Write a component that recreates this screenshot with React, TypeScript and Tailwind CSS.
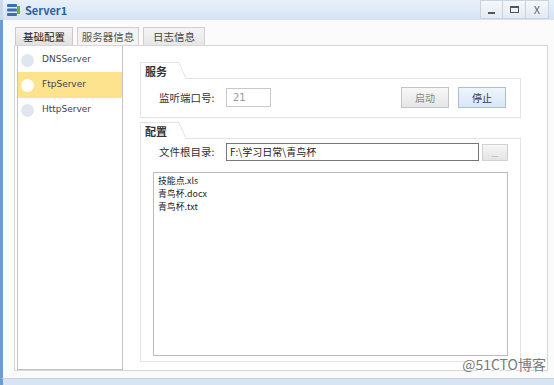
import React from "react";

const font = { fontFamily: '"Noto Sans CJK SC", "Liberation Sans", sans-serif' };

function GroupTab({ label }: { label: string }) {
  return (
    <div className="flex items-end h-[16px]">
      <div className="h-[16px] pl-[4px] pr-[10px] border-t border-l border-[#e3e3e3] bg-white text-[11px] leading-[16px] font-bold text-[#333]">
        {label}
      </div>
      <svg width="10" height="16" className="-ml-[1px]">
        <path d="M0 0.5 L3 0.5 L9.5 15.5" stroke="#e3e3e3" fill="white" />
      </svg>
    </div>
  );
}

function Circle({ active }: { active?: boolean }) {
  return (
    <div
      className={
        "w-[13px] h-[13px] rounded-full " +
        (active ? "bg-white" : "bg-[#dfe6f0]")
      }
    />
  );
}

export default function App() {
  return (
    <div className="w-[554px] h-[385px] bg-white flex flex-col overflow-hidden relative" style={font}>
      {/* Title bar */}
      <div className="h-[20px] flex items-center bg-gradient-to-b from-[#e8f1fa] to-[#d3e3f3] border-l-[3px] border-[#c9d9ea]">
        <svg width="15" height="14" viewBox="0 0 15 14" className="ml-[3px]">
          <rect x="1" y="1" width="10" height="3" rx="1" fill="#3b6fb0" />
          <rect x="1" y="5.5" width="10" height="3" rx="1" fill="#3b6fb0" />
          <rect x="1" y="10" width="10" height="3" rx="1" fill="#3b6fb0" />
          <rect x="11" y="3" width="3" height="8" fill="#6fb03b" />
        </svg>
        <span className="ml-[4px] text-[11px] font-bold text-[#2f5f9f]">Server1</span>
        <div className="ml-auto flex h-[19px] self-start mr-[5px]">
          <div className="w-[23px] h-[19px] border border-[#c8d3de] bg-gradient-to-b from-[#f5f8fb] to-[#e2eaf2] flex items-center justify-center">
            <div className="w-[7px] h-[2px] bg-[#555] mt-[6px]" />
          </div>
          <div className="w-[23px] h-[19px] border border-l-0 border-[#c8d3de] bg-gradient-to-b from-[#f5f8fb] to-[#e2eaf2] flex items-center justify-center">
            <div className="w-[9px] h-[7px] border border-[#555] border-t-2" />
          </div>
          <div className="w-[23px] h-[19px] border border-l-0 border-[#c8d3de] bg-gradient-to-b from-[#f5f8fb] to-[#e2eaf2] flex items-center justify-center text-[11px] text-[#666]">
            X
          </div>
        </div>
      </div>

      {/* Body */}
      <div className="flex-1 flex flex-col border-l-[3px] border-[#6e9bd0] bg-[#fbfbfb]">
        {/* Tabs */}
        <div className="flex gap-[4px] mt-[7px] ml-[12px] h-[18px] items-end text-[10.5px]">
          <div className="w-[58px] h-[18px] border border-b-0 border-[#c9c9c9] bg-gradient-to-b from-[#f4f4f4] to-[#e1e1e1] flex items-center justify-center text-[#222]">
            基础配置
          </div>
          <div className="w-[62px] h-[18px] border border-b-0 border-[#cfcfcf] bg-[#f3f3f3] flex items-center justify-center text-[#555]">
            服务器信息
          </div>
          <div className="w-[62px] h-[18px] border border-b-0 border-[#cfcfcf] bg-gradient-to-b from-[#f4f4f4] to-[#e6e6e6] flex items-center justify-center text-[#444]">
            日志信息
          </div>
        </div>

        {/* Panel */}
        <div className="ml-[11px] mr-[6px] h-[326px] border border-[#d6d6d6] bg-white flex">
          {/* Left list */}
          <div className="w-[106px] ml-[2px] h-[324px] border border-t-0 border-[#c4c4c4] bg-white flex flex-col pt-[2px] text-[9px] text-[#444]" style={{ fontFamily: '"DejaVu Sans", sans-serif' }}>
            <div className="h-[24px] flex items-center pl-[3px] gap-[8px]">
              <Circle />
              <span>DNSServer</span>
            </div>
            <div className="h-[26px] flex items-center pl-[3px] gap-[8px] bg-[#fde38d]">
              <Circle active />
              <span>FtpServer</span>
            </div>
            <div className="h-[24px] flex items-center pl-[3px] gap-[8px]">
              <Circle />
              <span>HttpServer</span>
            </div>
          </div>

          {/* Right */}
          <div className="flex-1 flex flex-col pl-[17px] pr-[26px] pt-[16px] pb-[8px]">
            {/* 服务 */}
            <GroupTab label="服务" />
            <div className="h-[40px] border border-t-0 border-[#e3e3e3] flex items-center relative">
              <div className="absolute top-0 left-[44px] right-0 h-px bg-[#e3e3e3]" />
              <span className="ml-[18px] text-[10.5px] text-[#333] w-[67px]">监听端口号:</span>
              <div className="w-[45px] h-[19px] border border-[#c8c8c8] bg-white text-[10px] text-[#999] pl-[6px] leading-[17px]" style={{ fontFamily: '"DejaVu Sans", sans-serif' }}>
                21
              </div>
              <div className="ml-auto w-[48px] h-[21px] border border-[#c4c4c4] bg-gradient-to-b from-[#f7f7f7] to-[#e6e6e6] flex items-center justify-center text-[10px] text-[#888]">
                启动
              </div>
              <div className="ml-[9px] mr-[14px] w-[48px] h-[21px] border border-[#a9bfd8] bg-gradient-to-b from-[#eef5fc] to-[#d8e7f6] flex items-center justify-center text-[10px] text-[#335]">
                停止
              </div>
            </div>

            {/* 配置 */}
            <div className="mt-[4px]">
              <GroupTab label="配置" />
            </div>
            <div className="flex-1 border border-t-0 border-[#e3e3e3] flex flex-col relative">
              <div className="absolute top-0 left-[44px] right-0 h-px bg-[#e3e3e3]" />
              <div className="flex items-center mt-[5px]">
                <span className="ml-[18px] text-[10.5px] text-[#333] w-[67px]">文件根目录:</span>
                <div className="w-[253px] h-[18px] border border-[#777] bg-white text-[10px] text-[#222] pl-[3px] leading-[16px]">
                  F:\学习日常\青鸟杯
                </div>
                <div className="ml-[3px] w-[26px] h-[17px] border border-[#d0d0d0] bg-gradient-to-b from-[#f6f6f6] to-[#e4e4e4] flex items-center justify-center text-[8px] text-[#999] leading-none pt-[3px]">
                  ...
                </div>
              </div>
              <div className="mt-[11px] ml-[12px] mr-[12px] h-[184px] border border-[#bcbcbc] bg-white px-[4px] pt-[1px] text-[8.9px] text-[#222] flex flex-col">
                <div className="h-[13px] leading-[13px]">技能点.xls</div>
                <div className="h-[13px] leading-[13px]">青鸟杯.docx</div>
                <div className="h-[13px] leading-[13px]">青鸟杯.txt</div>
              </div>
            </div>
          </div>
        </div>
        <div className="flex-1 relative">
          <span className="absolute right-[8px] -top-[14px] text-[14px] text-[#7a7a7a] leading-none" style={{ textShadow: "0 0 2px #fff, 1px 1px 0 #fff" }}>
            @51CTO博客
          </span>
        </div>
      </div>
      <div className="h-[7px] bg-[#d7e5f3] border-t border-[#c2d3e5] border-l-[3px] border-l-[#6e9bd0]" />
    </div>
  );
}
